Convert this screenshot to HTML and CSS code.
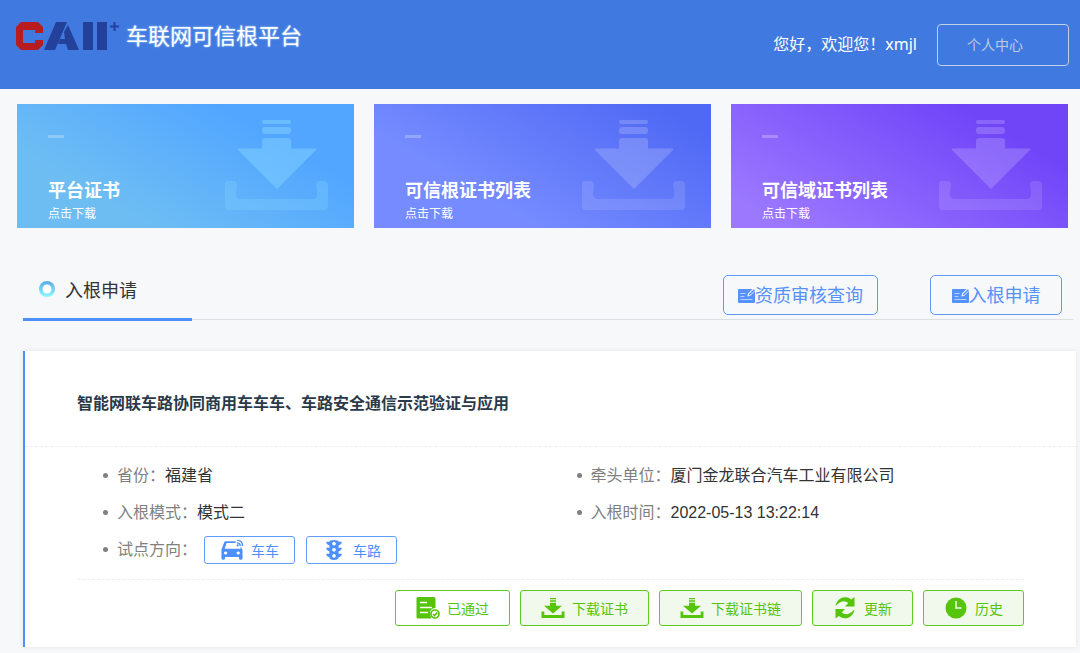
FILE: index.html
```html
<!DOCTYPE html>
<html lang="zh-CN">
<head>
<meta charset="utf-8">
<meta name="viewport" content="width=device-width, initial-scale=1">
<title>车联网可信根平台</title>
<link rel="stylesheet" href="styles.css">
</head>
<body>
<svg class="sprite" aria-hidden="true">
  <symbol id="tray" viewBox="0 0 103 92">
    <rect x="37" y="1" width="29" height="4" rx="2"/>
    <rect x="37" y="8" width="29" height="7" rx="3"/>
    <path d="M40 19h23q3 0 3 3v7.500h24q2 0 1 1.500L52 70 13 31q-1-1.500 1-1.500h23V22q0-3 3-3z"/>
    <path opacity=".65" d="M3 62h5q4 0 4 4l-1 7q-1 7 4 7h73q5 0 4-7l-1-7q0-4 4-4h4q4 0 4 4v21q0 4-4 4H4q-4 0-4-4V65q0-3 3-3z"/>
  </symbol>
  <symbol id="edit" viewBox="0 0 17 14">
    <path fill="currentColor" d="M1 0h13.500L10 4.500 9.300 7.500l3-.8L17 2V13q0 1-1 1H1q-1 0-1-1V1q0-1 1-1z"/>
    <path fill="currentColor" d="M15.800.3 17 1.200 12 6l-1.300.3.300-1.300z"/>
    <path stroke="#b5d1fd" d="M2.500 4.500h5M2.500 7.500h4M2.500 10.500h12"/>
  </symbol>
  <symbol id="download" viewBox="0 0 24 24">
    <path fill="currentColor" d="M9 2h6v1.200H9zM9 4.200h6v1.500H9zM9 6.700h6v3h6L12 17.500 3 9.700h6zM.5 15.500h2.800V19h17.400v-3.500h2.800V22H.5z"/>
  </symbol>
  <symbol id="passed" viewBox="0 0 24 24">
    <path fill="currentColor" d="M2 1h16q1.500 0 1.500 1.500V12q-4.500.3-5.500 4-.5 3.500 1.500 6.500H2Q.5 22.500.5 21V2.500Q.5 1 2 1z"/>
    <path stroke="#fff" stroke-width="1.500" d="M4 6.500h7M4 11.500h12M4 16.500h8"/>
    <circle cx="19" cy="18" r="4" fill="#fff" stroke="currentColor" stroke-width="1.700"/>
    <path fill="none" stroke="currentColor" stroke-width="1.700" d="m17 18 1.500 1.500 2.800-3"/>
  </symbol>
  <symbol id="refresh" viewBox="0 0 24 24">
    <path fill="currentColor" d="M2.500 10C3.500 4.500 7.500 1 12.500 1.200q3.300.1 5.800 2.300L21.500 1v9.500H12l3.300-3.600Q9.500 2.500 2.500 10zM21.500 13.500c-1 5.500-5 9-10 8.800q-3.300-.1-5.600-2.200L2.500 22.500V13H12l-3.300 3.600q5.800 4.400 12.800-3.100z"/>
  </symbol>
  <symbol id="clock" viewBox="0 0 24 24">
    <circle cx="12" cy="12" r="10.500" fill="currentColor"/>
    <path fill="none" stroke="#c9efb4" stroke-width="2" d="M12 5V12h5.500"/>
  </symbol>
  <symbol id="car" viewBox="0 0 24 24">
    <path fill="currentColor" fill-rule="evenodd" d="M5 2.500h11v1.800H6.200L4 10.500h17.500L21 9h1l1.500 3v9q0 1.500-1.500 1.500h-1q-1.500 0-1.500-1.500v-1.500h-15V21q0 1.500-1.500 1.500H2Q.5 22.500.5 21v-9.500L3.500 3.500Q4 2.500 5 2.500zM5 13.500a1.800 1.800 0 1 0 .01 0zM18.800 13.500a1.800 1.800 0 1 0 .01 0z"/>
    <path fill="none" stroke="currentColor" stroke-width="1.500" d="M17.500 1.500q6 0 6 6M17.500 4.200q3.500 0 3.500 3.500"/>
    <circle cx="18.200" cy="7" r="1.200" fill="currentColor"/>
  </symbol>
  <symbol id="signal" viewBox="0 0 24 24">
    <path fill="currentColor" fill-rule="evenodd" d="M7 3q0-2 5-2t5 2h3.500q0 3-3.500 4v2.500h3.500q0 3-3.500 4V16h3.500q0 3-3.500 4 0 3-5 3t-5-3q-3.500-1-3.500-4H7v-2.500q-3.500-1-3.500-4H7V7Q3.500 6 3.500 3zM12 3a2 2 0 1 0 .01 0zM12 9.700a2 2 0 1 0 .01 0zM12 16.400a2 2 0 1 0 .01 0z"/>
  </symbol>
</svg>

<header class="topbar">
  <div class="brand">
    <svg class="brand-mark" viewBox="0 0 104 30" role="img" aria-label="CAICT">
      <path fill="#b91c20" d="M6 0h17l5 5v6h-8V8H8v13h12v-3h8v5l-5 5H6l-5-5V5z"/>
      <path fill="#23419a" d="M41 0h11L40 28H29zM53 3l11 25H53l-2-6h-8l2-5h5L49 10z"/>
      <path fill="#23419a" d="M68 0h10v28H68zM82 0h10v28H82z"/>
      <path stroke="#23419a" stroke-width="2" d="M99.500 0v9M95 4.500h9"/>
    </svg>
    <span class="brand-name">车联网可信根平台</span>
  </div>
  <div class="user">
    <span class="greeting">您好，欢迎您！xmjl</span>
    <button class="profile" type="button">个人中心</button>
  </div>
</header>

<main>
  <section class="cards">
    <a class="card card-blue" href="#platform">
      <span class="card-text"><span class="dash"></span><strong>平台证书</strong><span>点击下载</span></span>
      <svg class="card-icon"><use href="#tray"/></svg>
    </a>
    <a class="card card-indigo" href="#root">
      <span class="card-text"><span class="dash"></span><strong>可信根证书列表</strong><span>点击下载</span></span>
      <svg class="card-icon"><use href="#tray"/></svg>
    </a>
    <a class="card card-violet" href="#domain">
      <span class="card-text"><span class="dash"></span><strong>可信域证书列表</strong><span>点击下载</span></span>
      <svg class="card-icon"><use href="#tray"/></svg>
    </a>
  </section>

  <section class="section-head">
    <h2 class="tab"><svg class="ring" viewBox="0 0 16 16"><defs><linearGradient id="ringFill" x2="0" y2="1"><stop stop-color="#5aa9e6"/><stop offset="1" stop-color="#8dfaff"/></linearGradient></defs><circle cx="8" cy="8" r="8" fill="url(#ringFill)"/><circle cx="8" cy="8" r="4.500" fill="#fff"/></svg>入根申请</h2>
    <div class="head-actions">
      <button class="outline" type="button"><svg class="edit"><use href="#edit"/></svg>资质审核查询</button>
      <button class="outline" type="button"><svg class="edit"><use href="#edit"/></svg>入根申请</button>
    </div>
  </section>

  <article class="panel">
    <h3 class="panel-title">智能网联车路协同商用车车车、车路安全通信示范验证与应用</h3>
    <div class="panel-body">
      <ul class="facts">
        <li><span class="fact"><span class="label">省份：</span>福建省</span></li>
        <li><span class="fact"><span class="label">牵头单位：</span>厦门金龙联合汽车工业有限公司</span></li>
        <li><span class="fact"><span class="label">入根模式：</span>模式二</span></li>
        <li><span class="fact"><span class="label">入根时间：</span>2022-05-13 13:22:14</span></li>
        <li><span class="fact"><span class="label">试点方向：</span></span>
          <span class="chips">
            <span class="chip"><svg class="icon"><use href="#car"/></svg>车车</span>
            <span class="chip"><svg class="icon"><use href="#signal"/></svg>车路</span>
          </span>
        </li>
      </ul>
      <div class="actions">
        <button class="action action-plain" type="button"><svg class="icon"><use href="#passed"/></svg>已通过</button>
        <button class="action" type="button"><svg class="icon"><use href="#download"/></svg>下载证书</button>
        <button class="action" type="button"><svg class="icon"><use href="#download"/></svg>下载证书链</button>
        <button class="action" type="button"><svg class="icon"><use href="#refresh"/></svg>更新</button>
        <button class="action" type="button"><svg class="icon"><use href="#clock"/></svg>历史</button>
      </div>
    </div>
  </article>
</main>
</body>
</html>
```
FILE: styles.css
```css
* {
  box-sizing: border-box;
}

body {
  margin: 0;
  background: #f7f8fa;
  color: #333;
  font-family: "Liberation Sans", "Noto Sans CJK SC", sans-serif;
  font-size: 16px;
}

button {
  font-family: inherit;
  cursor: pointer;
}

.sprite {
  display: none;
}

.topbar {
  display: flex;
  justify-content: space-between;
  align-items: center;
  min-height: 89px;
  padding: 0 11px 0 15px;
  background: #4079e0;
  color: #fff;
}

.brand {
  display: flex;
  align-items: center;
  gap: 7px;
  padding-bottom: 16px;
}

.brand-mark {
  width: 104px;
  height: 30px;
}

.brand-name {
  font-size: 22px;
  line-height: 30px;
  font-weight: 400;
  text-shadow: 0 0 2px #b8e4ff;
}

.user {
  display: flex;
  align-items: center;
  gap: 20px;
}

.greeting {
  padding-bottom: 4px;
  font-family: "Noto Sans", "Noto Sans CJK SC", sans-serif;
}

.profile {
  width: 132px;
  height: 42px;
  padding: 0 16px 2px 0;
  border: 1px solid #c3d0e6;
  border-radius: 4px;
  background: transparent;
  color: #bccbe4;
  font-size: 14px;
}

.cards {
  display: grid;
  grid-template-columns: repeat(3, 1fr);
  gap: 20px;
  padding: 15px 12px 0 17px;
}

.card {
  display: flex;
  justify-content: space-between;
  min-height: 124px;
  padding: 15px 26px 5px 31px;
  color: #fff;
  text-decoration: none;
}

.card-blue {
  background: linear-gradient(30deg, #6dbdf3 25%, #52a6ff 75%);
}

.card-indigo {
  background: linear-gradient(30deg, #758bff 30%, #5069f4 90%);
}

.card-violet {
  background: linear-gradient(30deg, #9b78ff 10%, #7045f8 80%);
}

.card-text {
  display: flex;
  flex-direction: column;
  font-size: 12px;
  line-height: 18px;
}

.card-text strong {
  margin-top: auto;
  font-size: 18px;
  line-height: 28px;
}

.dash {
  width: 16px;
  height: 3px;
  margin-top: 16px;
  background: rgba(255, 255, 255, 0.25);
}

.card-icon {
  width: 103px;
  height: 92px;
  fill: rgba(255, 255, 255, 0.18);
}

.card-blue .card-icon {
  fill: rgba(130, 210, 255, 0.5);
}

.section-head {
  display: flex;
  justify-content: space-between;
  margin: 47px 7px 0 23px;
  border-bottom: 1px solid #dcdfe4;
}

.tab {
  display: flex;
  align-items: center;
  gap: 10px;
  width: 169px;
  margin: 0 0 -2px;
  padding: 0 16px 15px;
  border-bottom: 3px solid #4d8ffb;
  font-size: 18px;
  font-weight: 400;
}

.ring {
  width: 16px;
  height: 16px;
}

.head-actions {
  display: flex;
  gap: 52px;
  padding: 0 11px 4px 0;
}

.outline {
  display: flex;
  align-items: center;
  justify-content: center;
  min-width: 132px;
  height: 40px;
  padding: 0 14px 2px;
  border: 1px solid #5f9bf8;
  border-radius: 5px;
  background: transparent;
  color: #5592fa;
  font-size: 18px;
}

.edit {
  width: 17px;
  height: 14px;
  margin-top: 4px;
}

.panel {
  margin: 31px 4px 6px 23px;
  border-left: 2px solid #4d8ffb;
  background: #fff;
  box-shadow: 0 0 5px rgba(0, 0, 0, 0.08);
}

.panel-title {
  margin: 0;
  padding: 41px 52px 30px;
  border-bottom: 1px dashed #ebeef0;
  color: #2b3a48;
  font-size: 16px;
  line-height: 24px;
}

.panel-body {
  padding: 10px 52px 21px;
}

.facts {
  display: grid;
  grid-template-columns: 1fr 1fr;
  grid-auto-rows: 37px;
  margin: 0;
  padding: 0 0 11px;
  border-bottom: 1px dashed #ebeef0;
  list-style: none;
}

.facts li {
  display: flex;
  align-items: center;
  padding-left: 26px;
}

.facts li::before {
  content: "";
  width: 5px;
  height: 5px;
  margin-right: 9px;
  border-radius: 50%;
  background: #808080;
}

.fact {
  padding-bottom: 3px;
}

.label {
  color: #808080;
}

.chips {
  display: flex;
  gap: 11px;
  margin-left: 7px;
}

.chip {
  display: flex;
  align-items: center;
  gap: 7px;
  height: 28px;
  padding: 0 15px;
  border: 1px solid #5f9bf8;
  border-radius: 3px;
  color: #4d8ffb;
  font-size: 14px;
}

.icon {
  width: 24px;
  height: 24px;
}

.chip .icon {
  height: 22px;
}

.actions {
  display: flex;
  justify-content: flex-end;
  gap: 10px;
  padding-top: 10px;
}

.action {
  display: flex;
  align-items: center;
  gap: 7px;
  height: 36px;
  padding: 0 20px 1px;
  border: 1px solid #5ecb21;
  border-radius: 3px;
  background: #f0f9eb;
  color: #56c40a;
  font-size: 14px;
}

.action-plain {
  background: #fff;
}
```
